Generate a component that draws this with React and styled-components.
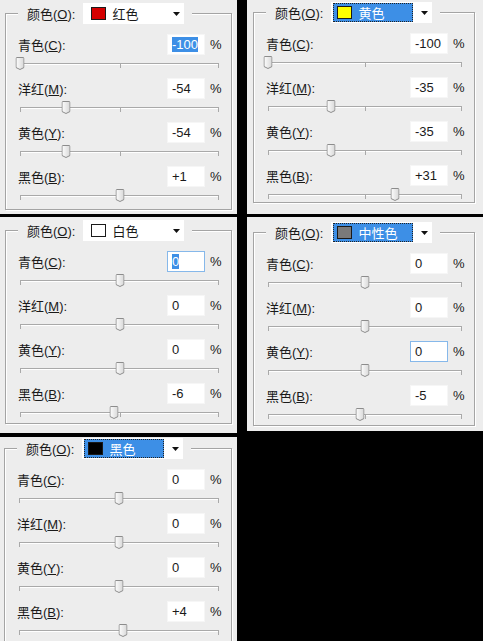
import styled, { createGlobalStyle } from "styled-components";

const GlobalStyle = createGlobalStyle`
    body {
        margin: 0;
        background: #000;
        font-family: "Liberation Sans", "Noto Sans CJK SC", sans-serif;
    }
`;

const Page = styled.div`
    display: grid;
    grid-template-columns: 237px 236px;
    grid-template-rows: 214px 217px 204px;
    column-gap: 10px;
    row-gap: 3px;
    width: 483px;
    height: 641px;
    overflow: hidden;
    background: #000;
`;

const Panel = styled.div`
    display: flex;
    align-self: start;
    height: ${(p) => p.$h}px;
    overflow: hidden;
    background: #ededed;
`;

const Group = styled.fieldset`
    display: flex;
    flex: 1;
    flex-direction: column;
    min-width: 0;
    margin: ${(p) => p.$m};
    padding: 10px 12px 0;
    border: 1px solid #a4a4a4;
    box-shadow: inset 1px 1px 0 #fff, 1px 1px 0 #fff;
`;

const Legend = styled.legend`
    display: flex;
    align-items: center;
    gap: 8px;
    height: 21px;
    padding: 0 8px 0 9px;
    font-size: 13px;
    color: #1a1a1a;
    background: #ededed;
`;

const Dropdown = styled.div`
    display: flex;
    align-items: stretch;
    width: 101px;
    height: 21px;
    box-sizing: border-box;
    background: #fff;
`;

const Selection = styled.div`
    display: flex;
    flex: 1;
    align-items: center;
    gap: 6px;
    margin: 1px 0 1px 2px;
    padding-left: ${(p) => (p.$active ? 4 : 6)}px;
    color: ${(p) => (p.$active ? "#fff" : "#1a1a1a")};
    background: ${(p) => (p.$active ? "#3d8fe6" : "transparent")};
    outline: ${(p) => (p.$active ? "1px dotted #222" : "none")};
    outline-offset: -1px;
`;

const Swatch = styled.span`
    width: 15px;
    height: 13px;
    box-sizing: border-box;
    border: 1px solid #1a1a1a;
    background: ${(p) => p.$c};
`;

const ArrowZone = styled.div`
    display: flex;
    align-items: center;
    justify-content: flex-end;
    width: 19px;
    padding-right: 4px;
    box-sizing: border-box;
`;

const Row = styled.div`
    display: flex;
    align-items: center;
    height: 21px;
    font-size: 13px;
    color: #1a1a1a;
`;

const Label = styled.span`
    flex: 1;
    white-space: nowrap;
`;

const ValueBox = styled.div`
    display: flex;
    align-items: center;
    width: 38px;
    height: 21px;
    box-sizing: border-box;
    padding-left: 4px;
    border: 1px solid ${(p) => (p.$focus ? "#86b8ea" : "#f6f6f6")};
    background: #fff;
`;

const Value = styled.span`
    line-height: 15px;
    color: ${(p) => (p.$sel ? "#fff" : "#1a1a1a")};
    background: ${(p) => (p.$sel ? "#3d8fe6" : "transparent")};
`;

const Percent = styled.span`
    width: 9px;
    margin-left: 5px;
    white-space: nowrap;
`;

const Slider = styled.div`
    position: relative;
    height: 17px;
    margin: 0 0 6px 2px;

    &::before {
        content: "";
        position: absolute;
        left: 0;
        right: 0;
        top: 8px;
        height: 1px;
        background: #a9a9a9;
        border-bottom: 1px solid #fff;
    }
`;

const Tick = styled.span`
    position: absolute;
    top: 9px;
    left: ${(p) => p.$at};
    width: 1px;
    height: 4px;
    background: #a9a9a9;
`;

const Thumb = styled.svg`
    position: absolute;
    top: 2px;
    width: 9px;
    height: 13px;
    transform: translateX(-50%);
`;

const rows = [
    ["青色", "C"],
    ["洋红", "M"],
    ["黄色", "Y"],
    ["黑色", "B"],
];

const panels = [
    { h: 214, m: "3px 5px 4px 5px", swatch: "#d40000", name: "红色", values: [-100, -54, -54, 1], sel: 0 },
    { h: 214, m: "2px 8px 11px 6px", swatch: "#ffff00", name: "黄色", active: true, values: [-100, -35, -35, 31] },
    { h: 216, m: "3px 5px 9px 5px", swatch: "#ffffff", name: "白色", values: [0, 0, 0, -6], sel: 0, focus: 0 },
    { h: 214, m: "5px 8px 5px 6px", swatch: "#7a7a7a", name: "中性色", active: true, values: [0, 0, 0, -5], focus: 2 },
    { h: 204, m: "1px 5px -12px 4px", swatch: "#000000", name: "黑色", active: true, values: [0, 0, 0, 4] },
];

function fmt(v) {
    return v > 0 ? "+" + v : String(v);
}

function Arrow() {
    return (
        <svg width="7" height="4" viewBox="0 0 7 4">
            <path d="M0 0H7L3.5 4Z" fill="#111" />
        </svg>
    );
}

function SliderThumb({ value }) {
    return (
        <Thumb viewBox="0 0 9 13" style={{ left: ((value + 100) / 200) * 100 + "%" }}>
            <defs>
                <linearGradient id="tg" x1="0" y1="0" x2="1" y2="0">
                    <stop offset="0" stopColor="#fdfdfd" />
                    <stop offset="1" stopColor="#d8d8d8" />
                </linearGradient>
            </defs>
            <path d="M1.5 0.5H7.5Q8.5 0.5 8.5 1.5V10.5L4.5 12.5L0.5 10.5V1.5Q0.5 0.5 1.5 0.5Z" fill="url(#tg)" stroke="#8c8c8c" />
        </Thumb>
    );
}

function ColorPanel({ p }) {
    return (
        <Panel $h={p.h}>
            <Group $m={p.m}>
                <Legend>
                    <span>
                        颜色(<u>O</u>):
                    </span>
                    <Dropdown>
                        <Selection $active={p.active}>
                            <Swatch $c={p.swatch} />
                            <span>{p.name}</span>
                        </Selection>
                        <ArrowZone>
                            <Arrow />
                        </ArrowZone>
                    </Dropdown>
                </Legend>
                {rows.map(([name, key], i) => (
                    <div key={key}>
                        <Row>
                            <Label>
                                {name}(<u>{key}</u>):
                            </Label>
                            <ValueBox $focus={p.focus === i}>
                                <Value $sel={p.sel === i}>{fmt(p.values[i])}</Value>
                            </ValueBox>
                            <Percent>%</Percent>
                        </Row>
                        <Slider>
                            <Tick $at="0" />
                            <Tick $at="50%" />
                            <Tick $at="calc(100% - 1px)" />
                            <SliderThumb value={p.values[i]} />
                        </Slider>
                    </div>
                ))}
            </Group>
        </Panel>
    );
}

export default function App() {
    return (
        <>
            <GlobalStyle />
            <Page>
                {panels.map((p) => (
                    <ColorPanel key={p.name} p={p} />
                ))}
            </Page>
        </>
    );
}
